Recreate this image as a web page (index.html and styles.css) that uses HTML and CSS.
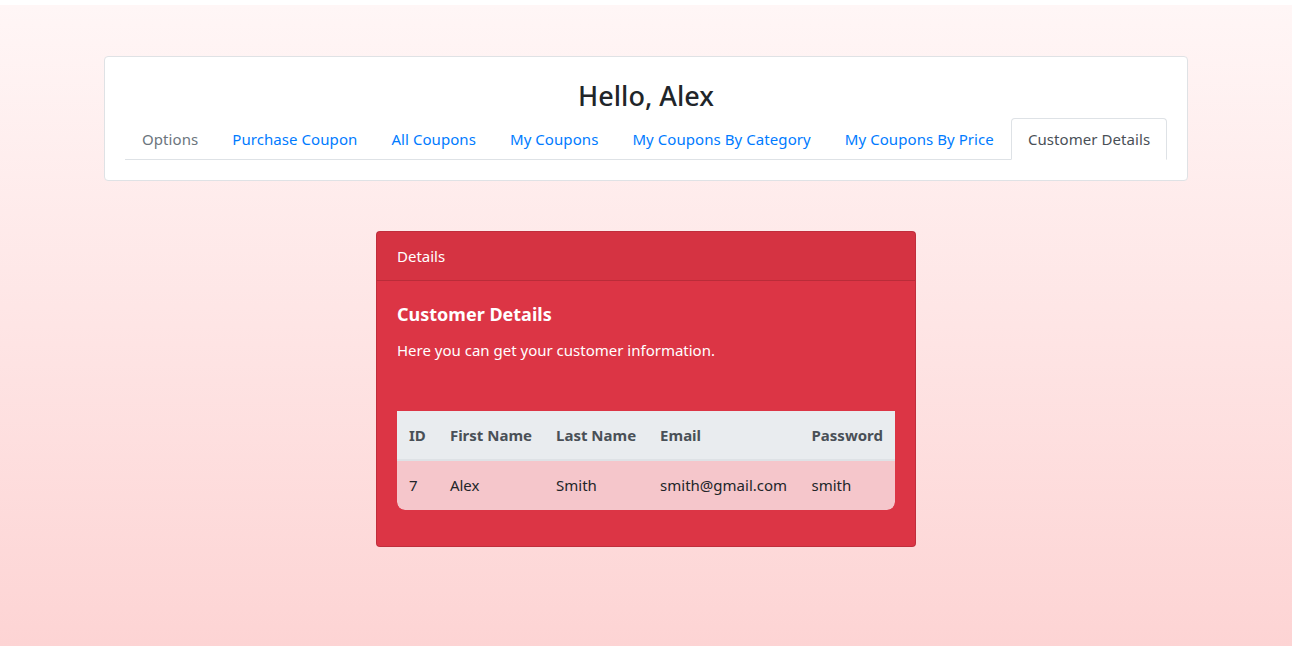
FILE: index.html
```html
<!DOCTYPE html>
<html lang="en">
<head>
<meta charset="utf-8">
<title>Customer Details</title>
<link rel="stylesheet" href="styles.css">
</head>
<body>
<div class="page">
  <div class="top-card">
    <h3 class="greeting">Hello, Alex</h3>
    <ul class="tabs">
      <li><span class="tab disabled">Options</span></li>
      <li><a class="tab" href="#">Purchase Coupon</a></li>
      <li><a class="tab" href="#">All Coupons</a></li>
      <li><a class="tab" href="#">My Coupons</a></li>
      <li><a class="tab" href="#">My Coupons By Category</a></li>
      <li><a class="tab" href="#">My Coupons By Price</a></li>
      <li><a class="tab active" href="#">Customer Details</a></li>
    </ul>
  </div>

  <div class="details-card">
    <div class="details-header">Details</div>
    <div class="details-body">
      <h5 class="details-title">Customer Details</h5>
      <p class="details-text">Here you can get your customer information.</p>
      <table class="info-table">
        <thead>
          <tr>
            <th class="c-id">ID</th>
            <th class="c-first">First Name</th>
            <th class="c-last">Last Name</th>
            <th class="c-email">Email</th>
            <th class="c-pass">Password</th>
          </tr>
        </thead>
        <tbody>
          <tr>
            <td>7</td>
            <td>Alex</td>
            <td>Smith</td>
            <td>smith@gmail.com</td>
            <td>smith</td>
          </tr>
        </tbody>
      </table>
    </div>
  </div>
</div>
</body>
</html>
```
FILE: styles.css
```css
* { box-sizing: border-box; }
html, body { margin: 0; padding: 0; height: 100%; }
body {
  font-family: "Noto Sans", "Open Sans", "Liberation Sans", sans-serif;
  font-size: 16px;
  line-height: 1.5;
  color: #212529;
  background: linear-gradient(to bottom, #ffffff 0, #ffffff 5px, #fff6f6 5px, #fdd4d4 100%);
}
.page {
  padding-top: 56px;
  display: flex;
  flex-direction: column;
  align-items: center;
}
.top-card {
  width: 1084px;
  background: #fff;
  border: 1px solid #dfe2e5;
  border-radius: 4px;
  padding: 20px;
}
.greeting {
  margin: 0 0 5px;
  padding-top: 2px;
  text-align: center;
  font-size: 27px;
  font-weight: 500;
  line-height: 34px;
  color: #212529;
}
.tabs {
  list-style: none;
  margin: 0;
  padding: 0;
  display: flex;
  border-bottom: 1px solid #dee2e6;
}
.tabs li { margin-bottom: -1px; }
.tab {
  display: block;
  padding: 8px 16px;
  border: 1px solid transparent;
  border-top-left-radius: 4px;
  border-top-right-radius: 4px;
  color: #007bff;
  text-decoration: none;
  font-size: 15px;
  line-height: 24px;
  letter-spacing: 0.07px;
  white-space: nowrap;
}
.tab.disabled { color: #6c757d; }
.tab.active {
  color: #495057;
  background: #fff;
  border-color: #dee2e6 #dee2e6 #fff;
}
.details-card {
  margin-top: 50px;
  width: 540px;
  background: #dc3545;
  border: 1px solid rgba(0,0,0,0.125);
  border-radius: 4px;
  color: #fff;
}
.details-header {
  padding: 12px 20px;
  background: rgba(0,0,0,0.03);
  border-bottom: 1px solid rgba(0,0,0,0.125);
  font-size: 15px;
  line-height: 24px;
}
.details-body { padding: 20px; }
.details-title {
  margin: 0 0 12px;
  padding-top: 1px;
  font-size: 18px;
  font-weight: 700;
  line-height: 24px;
}
.details-text {
  margin: 0 0 49px;
  font-size: 15px;
  line-height: 24px;
}
.info-table {
  width: 498px;
  border-collapse: separate;
  border-spacing: 0;
  margin-bottom: 16px;
  font-size: 15px;
  border-radius: 0 0 8px 8px;
  overflow: hidden;
}
.info-table th, .info-table td {
  padding: 12px;
  text-align: left;
  line-height: 24px;
  white-space: nowrap;
}
.info-table th {
  background: #e9ecef;
  color: #495057;
  font-weight: 700;
  border-bottom: 2px solid #dee2e6;
}
.info-table td {
  background: #f5c6cb;
  color: #212529;
  padding-bottom: 13px;
}
.info-table tbody tr td:first-child { border-bottom-left-radius: 8px; }
.info-table tbody tr td:last-child { border-bottom-right-radius: 8px; }
.c-id { width: 41px; }
.c-first { width: 106px; }
.c-last { width: 104px; }
.c-email { width: 152px; }
.c-pass { width: 95px; }
```
